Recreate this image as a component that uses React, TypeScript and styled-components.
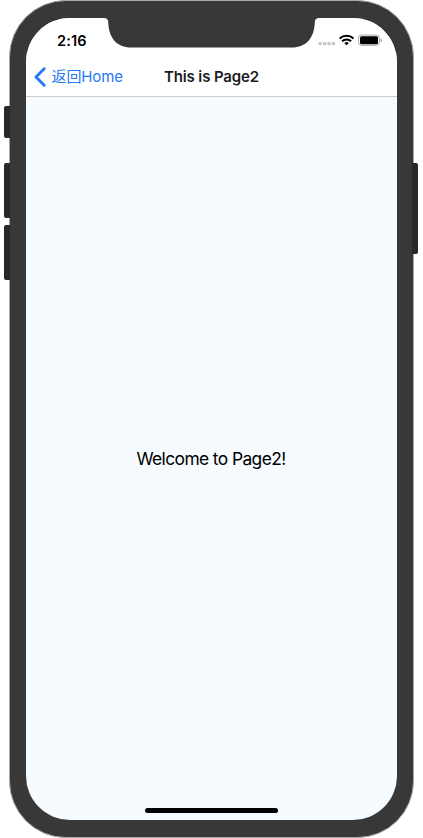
import React from "react";
import styled, { createGlobalStyle } from "styled-components";

const GlobalStyle = createGlobalStyle`
  * { box-sizing: border-box; }
  body {
    margin: 0;
    background: #fff;
    overflow: hidden;
    font-family: Inter, "Noto Sans CJK SC", sans-serif;
  }
`;

const Stage = styled.div`
  position: relative;
  width: 423px;
  height: 838px;
  padding: 0 9px;
`;

const Body = styled.div`
  position: relative;
  width: 405px;
  height: 838px;
  padding: 17px 15px 16px 16px;
  border: 1px solid #a5a8a7;
  border-radius: 57px;
  background: #383838;
`;

const SideButton = styled.div<{ $side: "left" | "right"; $top: number; $height: number }>`
  position: absolute;
  top: ${(p) => p.$top}px;
  ${(p) => p.$side}: ${(p) => (p.$side === "left" ? 4 : 5)}px;
  z-index: 1;
  width: 6px;
  height: ${(p) => p.$height}px;
  background: #282828;
  border-radius: ${(p) => (p.$side === "left" ? "2px 0 0 2px" : "0 2px 2px 0")};
`;

const Screen = styled.div`
  position: relative;
  display: flex;
  flex-direction: column;
  width: 371px;
  height: 802px;
  overflow: hidden;
  border-radius: 44px;
  background: #f5fbff;
`;

const Notch = styled.svg`
  position: absolute;
  top: 0;
  left: 78px;
`;

const StatusBar = styled.div`
  display: flex;
  justify-content: space-between;
  height: 39px;
  flex: none;
  background: #fff;
  padding: 13px 14px 0 31px;
`;

const Clock = styled.span`
  font-size: 14.5px;
  line-height: 19px;
  font-weight: 600;
  letter-spacing: 0.15px;
  color: #000;
`;

const NavBar = styled.header`
  display: grid;
  grid-template-columns: 120px 1fr 120px;
  align-items: center;
  flex: none;
  height: 40px;
  background: #fff;
  border-bottom: 1px solid #c9cbcd;
`;

const BackButton = styled.button`
  display: flex;
  align-items: center;
  gap: 5.5px;
  padding: 1px 0 0 8px;
  border: 0;
  background: none;
  color: #2378f5;
  font: inherit;
  font-size: 15px;
  line-height: 20px;
  letter-spacing: -0.1px;
  white-space: nowrap;
`;

const Title = styled.h1`
  margin: 0;
  text-align: center;
  font-size: 15px;
  line-height: 20px;
  font-weight: 600;
  letter-spacing: -0.12px;
  color: #1c1c1e;
  white-space: nowrap;
`;

const Content = styled.main`
  flex: 1;
  display: flex;
  align-items: center;
  justify-content: center;
`;

const Welcome = styled.p`
  margin: 0 1px 0 0;
  font-size: 17.4px;
  line-height: 22px;
  letter-spacing: -0.6px;
  color: #000;
`;

const HomeIndicator = styled.div`
  position: absolute;
  left: 119px;
  bottom: 7px;
  width: 133px;
  height: 5px;
  border-radius: 3px;
  background: #000;
`;

function StatusIcons() {
  return (
    <svg width="66" height="20" viewBox="0 0 66 20">
      <g fill="#c7c7c7">
        <rect x="1.5" y="11" width="3.3" height="3.3" rx="0.8" />
        <rect x="6" y="11" width="3.3" height="3.3" rx="0.8" />
        <rect x="10.3" y="11" width="3.3" height="3.3" rx="0.8" />
        <rect x="14.7" y="11" width="3.3" height="3.3" rx="0.8" />
      </g>
      <g fill="none" stroke="#000" strokeWidth="2.1">
        <path d="M22.7 7.5a10 10 0 0 1 13.8 0" />
        <path d="M25.1 10.3a6.5 6.5 0 0 1 9 0" />
      </g>
      <path d="M29.6 14.3l-2.2-2.2a3.3 3.3 0 0 1 4.4 0z" fill="#000" />
      <rect x="41.6" y="4.1" width="20.8" height="10.3" rx="2.8" fill="none" stroke="#a6a6a6" />
      <rect x="43" y="5.3" width="18" height="8" rx="1.5" fill="#000" />
      <path d="M63.5 7.4q1.6.4 1.6 1.8t-1.6 1.8z" fill="#a6a6a6" />
    </svg>
  );
}

export default function App() {
  return (
    <>
      <GlobalStyle />
      <Stage>
        <SideButton $side="left" $top={106} $height={32} />
        <SideButton $side="left" $top={163} $height={55} />
        <SideButton $side="left" $top={225} $height={55} />
        <SideButton $side="right" $top={163} $height={91} />
        <Body>
          <Screen>
            <StatusBar>
              <Clock>2:16</Clock>
              <StatusIcons />
            </StatusBar>
            <Notch width="215" height="30" viewBox="0 0 215 30">
              <path d="M0 0Q4.3 0 4.3 5C4.8 20 13 29.5 27 29.5H188C202 29.5 210.2 20 210.7 5Q210.7 0 215 0Z" fill="#383838" />
            </Notch>
            <NavBar>
              <BackButton>
                <svg width="12" height="20" viewBox="0 0 12 20">
                  <path d="M10.2 1.8L2 10L10.2 18.2" fill="none" stroke="#2378f5" strokeWidth="2.9" strokeLinecap="round" strokeLinejoin="round" />
                </svg>
                返回Home
              </BackButton>
              <Title>This is Page2</Title>
            </NavBar>
            <Content>
              <Welcome>Welcome to Page2!</Welcome>
            </Content>
            <HomeIndicator />
          </Screen>
        </Body>
      </Stage>
    </>
  );
}
